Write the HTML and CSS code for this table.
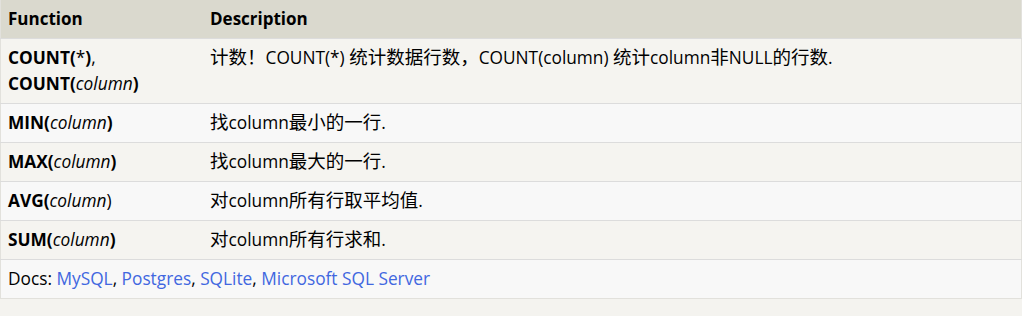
FILE: index.html
```html
<!DOCTYPE html>
<html>
<head>
<meta charset="utf-8">
<link rel="stylesheet" href="styles.css">
</head>
<body>
<table class="ref">
  <thead>
    <tr><th class="c1">Function</th><th>Description</th></tr>
  </thead>
  <tbody>
    <tr class="odd"><td class="c1"><b>COUNT(</b>*<b>)</b>,<br><b>COUNT(</b><i>column</i><b>)</b></td><td><span class="zh">计数！</span>COUNT(*) <span class="zh">统计数据行数，</span>COUNT(column) <span class="zh">统计</span>column<span class="zh">非</span>NULL<span class="zh">的行数</span>.</td></tr>
    <tr class="even"><td class="c1"><b>MIN(</b><i>column</i><b>)</b></td><td><span class="zh">找</span>column<span class="zh">最小的一行</span>.</td></tr>
    <tr class="odd"><td class="c1"><b>MAX(</b><i>column</i><b>)</b></td><td><span class="zh">找</span>column<span class="zh">最大的一行</span>.</td></tr>
    <tr class="even"><td class="c1"><b>AVG(</b><i>column</i>)</td><td><span class="zh">对</span>column<span class="zh">所有行取平均值</span>.</td></tr>
    <tr class="odd"><td class="c1"><b>SUM(</b><i>column</i><b>)</b></td><td><span class="zh">对</span>column<span class="zh">所有行求和</span>.</td></tr>
    <tr class="foot"><td colspan="2">Docs: <a href="#">MySQL</a>, <a href="#">Postgres</a>, <a href="#">SQLite</a>, <a href="#">Microsoft SQL Server</a></td></tr>
  </tbody>
</table>
</body>
</html>
```
FILE: styles.css
```css
html, body {
  margin: 0;
  padding: 0;
  background: #f4f3ef;
}
body {
  font-family: "Open Sans", "Noto Sans CJK SC", sans-serif;
  font-size: 17.3px;
  color: #000;
}
.ref {
  width: 1022px;
  border-collapse: collapse;
  border-left: 1px solid #e2e1dc;
  border-right: 1px solid #e2e1dc;
}
.ref th, .ref td {
  text-align: left;
  vertical-align: top;
  padding: 6px 7px;
  line-height: 26px;
}
.ref th {
  background: #dad9ce;
  font-weight: 700;
  font-size: 17px;
}
.ref td.c1, .ref th.c1 {
  width: 188px;
}
.ref tbody tr {
  border-top: 1px solid #dcdcdc;
}
.ref tr.odd { background: #f5f4f0; }
.ref tr.even { background: #f8f8f8; }
.ref tr.foot {
  background: #f8f8f8;
  border-bottom: 1px solid #e2e1dc;
}
.ref .zh {
  font-family: "Noto Sans CJK SC", sans-serif;
  font-size: 18.5px;
  line-height: 1;
}
.ref i { font-style: italic; }
.ref a {
  color: #4167e0;
  text-decoration: none;
}
```
